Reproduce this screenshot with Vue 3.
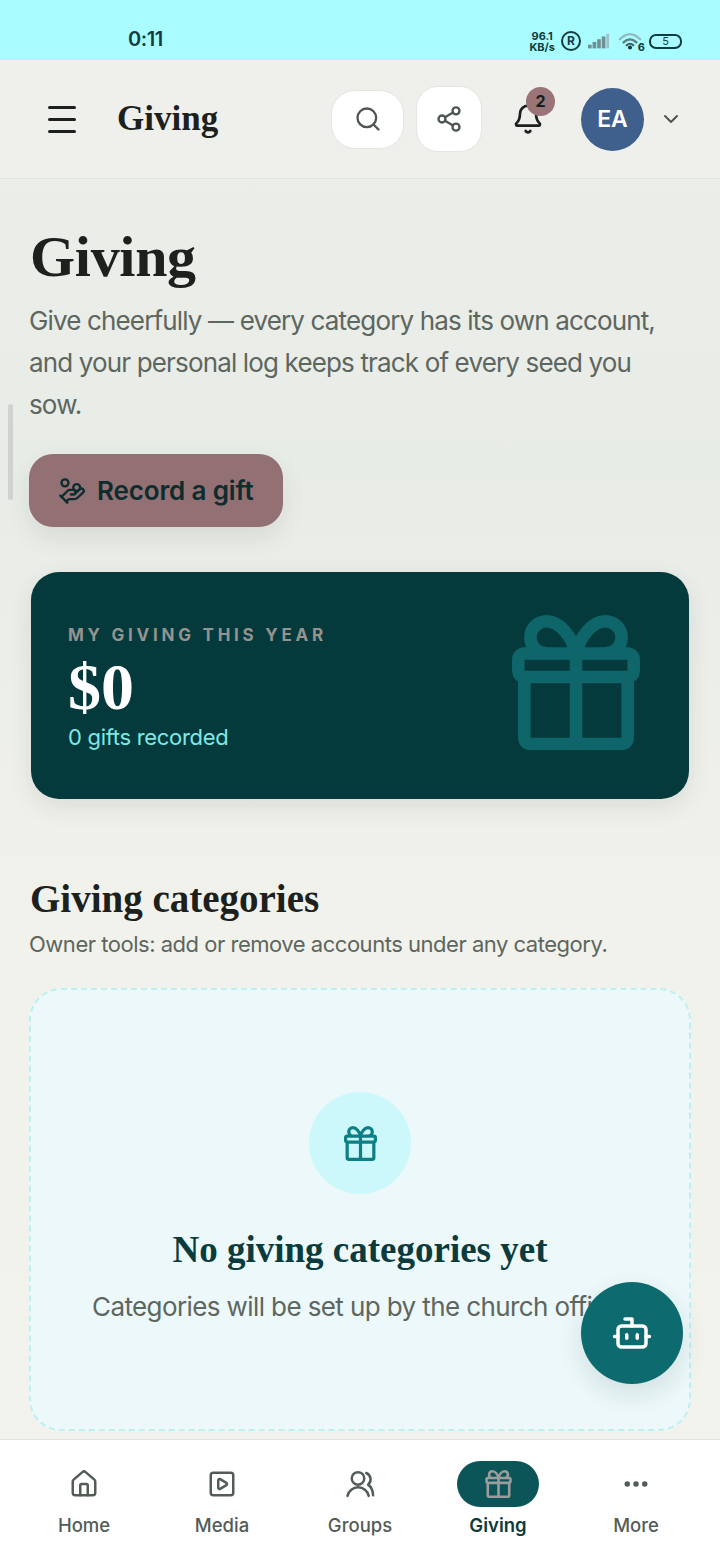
<script setup>
// Lucide-style icon bodies, all on a 24 unit grid
const navItems = [
  { label: 'Home', icon: 'home' },
  { label: 'Media', icon: 'media' },
  { label: 'Groups', icon: 'groups' },
  { label: 'Giving', icon: 'gift', active: true },
  { label: 'More', icon: 'more' }
];

// Gift shape is drawn on a 128x135 box so it scales for every size used here
const giftPath =
  'M12.3 38.5H115.7a6 6 0 0 1 6 6V56a6 6 0 0 1-6 6H12.3a6 6 0 0 1-6-6V44.5a6 6 0 0 1 6-6Z' +
  'M12.3 62V123a6 6 0 0 0 6 6H109.7a6 6 0 0 0 6-6V62' +
  'M64 38.5V129' +
  'M64 38.5C60 22 48 6.3 34.500 6.3A16 16 0 0 0 34.500 38.5' +
  'M64 38.5C68 22 80 6.3 93.500 6.3A16 16 0 0 1 93.500 38.5';
</script>

<template>
  <div class="screen">
    <div class="status-bar">
      <span class="clock">0:11</span>
      <div class="status-icons">
        <span class="speed">96.1<br />KB/s</span>
        <span class="reg">R</span>
        <svg class="signal" width="22" height="17" viewBox="0 0 24 17">
          <rect x="0" y="12" width="4" height="4" fill="#6f9092" />
          <rect x="5" y="9" width="4" height="7" fill="#6f9092" />
          <rect x="10" y="6" width="4" height="10" fill="#6f9092" />
          <rect x="15" y="3" width="4" height="13" fill="#6f9092" />
          <rect x="20" y="0" width="3" height="16" fill="#9cc4c6" />
        </svg>
        <span class="wifi">
          <svg width="24" height="19" viewBox="0 0 26 19" fill="none" stroke-linecap="round">
            <path d="M2 7C9 0 17 0 24 7" stroke="#8fb8ba" stroke-width="2.500" />
            <path d="M6 10.500C10.500 6 15.500 6 20 10.500" stroke="#5b7f82" stroke-width="2.500" />
            <path d="M9.500 13.500C11.500 11.500 14.500 11.500 16.500 13.500" stroke="#3d5f62" stroke-width="2.500" />
            <circle cx="13" cy="16" r="2.200" fill="#123c40" />
          </svg>
          <b>6</b>
        </span>
        <span class="battery">5</span>
      </div>
    </div>

    <header class="topbar">
      <button class="menu-btn" aria-label="Menu"><i></i><i></i><i></i></button>
      <div class="topbar-title">Giving</div>
      <button class="icon-btn search-btn" aria-label="Search">
        <svg width="28" height="28" viewBox="0 0 24 24" fill="none" stroke="#4e5651" stroke-width="2" stroke-linecap="round" stroke-linejoin="round">
          <circle cx="11" cy="11" r="8" />
          <path d="m21 21-4.300-4.300" />
        </svg>
      </button>
      <button class="icon-btn share-btn" aria-label="Share">
        <svg width="28" height="28" viewBox="0 0 24 24" fill="none" stroke="#4e5651" stroke-width="2" stroke-linecap="round" stroke-linejoin="round">
          <circle cx="18" cy="5" r="3" />
          <circle cx="6" cy="12" r="3" />
          <circle cx="18" cy="19" r="3" />
          <path d="M8.590 13.510 15.420 17.490M15.410 6.510 8.590 10.490" />
        </svg>
      </button>
      <div class="bell">
        <svg width="32" height="32" viewBox="0 0 24 24" fill="none" stroke="#1b211e" stroke-width="2" stroke-linecap="round" stroke-linejoin="round">
          <path d="M10.268 21a2 2 0 0 0 3.464 0" />
          <path d="M3.262 15.326A1 1 0 0 0 4 17h16a1 1 0 0 0 .74-1.673C19.410 13.956 18 12.499 18 8A6 6 0 0 0 6 8c0 4.499-1.411 5.956-2.738 7.326" />
        </svg>
        <span class="badge">2</span>
      </div>
      <div class="avatar">EA</div>
      <svg class="chevron" width="24" height="24" viewBox="0 0 24 24" fill="none" stroke="#4e5651" stroke-width="2" stroke-linecap="round" stroke-linejoin="round">
        <path d="m6 9 6 6 6-6" />
      </svg>
    </header>

    <main class="content">
      <h1>Giving</h1>
      <p class="lead">Give cheerfully — every category has its own account, and your personal log keeps track of every seed you sow.</p>

      <button class="record-btn">
        <svg width="28" height="28" viewBox="0 0 24 24" fill="none" stroke="#0d2c2e" stroke-width="2" stroke-linecap="round" stroke-linejoin="round">
          <path d="M11 15h2a2 2 0 1 0 0-4h-3c-.6 0-1.100.2-1.400.6L3 17" />
          <path d="m7 21 1.600-1.400c.3-.4.8-.6 1.400-.6h4c1.100 0 2.100-.4 2.800-1.200l4.600-4.400a2 2 0 0 0-2.750-2.910l-4.200 3.900" />
          <path d="m2 16 6 6" />
          <circle cx="16" cy="9" r="2.900" />
          <circle cx="6" cy="5" r="3" />
        </svg>
        Record a gift
      </button>

      <section class="year-card">
        <div class="year-text">
          <div class="year-label">MY GIVING THIS YEAR</div>
          <div class="year-amount">$0</div>
          <div class="year-count">0 gifts recorded</div>
        </div>
        <svg class="year-gift" width="128" height="135" viewBox="0 0 128 135" fill="none" stroke="#0e666b" stroke-width="12.500" stroke-linecap="round" stroke-linejoin="round">
          <path :d="giftPath" />
        </svg>
      </section>

      <h2>Giving categories</h2>
      <p class="section-note">Owner tools: add or remove accounts under any category.</p>

      <section class="empty-card">
        <div class="empty-icon">
          <svg width="33" height="35" viewBox="0 0 128 135" fill="none" stroke="#0e7f84" stroke-width="12.500" stroke-linecap="round" stroke-linejoin="round">
            <path :d="giftPath" />
          </svg>
        </div>
        <h3>No giving categories yet</h3>
        <p>Categories will be set up by the church office.</p>
      </section>
    </main>

    <nav class="bottom-nav">
      <a v-for="item in navItems" :key="item.label" class="nav-item" :class="{ active: item.active }">
        <span class="nav-icon">
          <svg v-if="item.icon === 'gift'" width="27" height="28" viewBox="0 0 128 135" fill="none" stroke="#9c9c9c" stroke-width="12.500" stroke-linecap="round" stroke-linejoin="round">
            <path :d="giftPath" />
          </svg>
          <svg v-else width="30" height="30" viewBox="0 0 24 24" fill="none" stroke="#545c57" stroke-width="2" stroke-linecap="round" stroke-linejoin="round">
            <template v-if="item.icon === 'home'">
              <path d="M15 21v-8a1 1 0 0 0-1-1h-4a1 1 0 0 0-1 1v8" />
              <path d="M3 10a2 2 0 0 1 .709-1.528l7-5.999a2 2 0 0 1 2.582 0l7 5.999A2 2 0 0 1 21 10v9a2 2 0 0 1-2 2H5a2 2 0 0 1-2-2z" />
            </template>
            <template v-else-if="item.icon === 'media'">
              <rect x="3" y="3" width="18" height="18" rx="2" />
              <path d="M9 9.003a1 1 0 0 1 1.517-.859l4.997 2.997a1 1 0 0 1 0 1.718l-4.997 2.997A1 1 0 0 1 9 14.996z" />
            </template>
            <template v-else-if="item.icon === 'groups'">
              <path d="M2 21.500a8.700 8.700 0 0 1 17 0" />
              <circle cx="10.400" cy="7.500" r="5" />
              <path d="M17 3.200a5.500 5.500 0 0 1 1.500 9.300c2.500 1.800 3.800 5 4 8.500" />
            </template>
            <template v-else>
              <circle cx="5" cy="12" r="1.200" fill="#545c57" />
              <circle cx="12" cy="12" r="1.200" fill="#545c57" />
              <circle cx="19" cy="12" r="1.200" fill="#545c57" />
            </template>
          </svg>
        </span>
        <span class="nav-label">{{ item.label }}</span>
      </a>
    </nav>

    <div class="scroll-thumb"></div>

    <button class="fab" aria-label="Assistant">
      <svg width="42" height="42" viewBox="0 0 24 24" fill="none" stroke="#fff" stroke-width="2" stroke-linecap="round" stroke-linejoin="round">
        <path d="M12 8V4H8" />
        <rect x="4" y="8" width="16" height="12" rx="2" />
        <path d="M2 14h2M20 14h2M15 13v2M9 13v2" />
      </svg>
    </button>
  </div>
</template>

<style scoped>
.screen {
  position: relative;
  width: 720px;
  height: 1560px;
  overflow: hidden;
  display: flex;
  flex-direction: column;
  font-family: Inter, "Liberation Sans", sans-serif;
  background: linear-gradient(180deg, #eeefe9 0%, #e8ece7 30%, #f2f2ec 60%, #f2f2ee 100%);
  color: #1c211d;
}

button {
  font-family: inherit;
  cursor: pointer;
}

.status-bar {
  height: 60px;
  flex: none;
  background: #a9fcff;
  display: flex;
  align-items: flex-end;
  justify-content: space-between;
  padding: 0 38px 8px 128px;
  box-sizing: border-box;
  color: #123c40;
}

.clock {
  font-size: 20px;
  font-weight: 600;
  line-height: 26px;
  letter-spacing: -0.4px;
}

.status-icons {
  display: flex;
  align-items: center;
  gap: 7px;
  height: 22px;
}

.speed {
  margin-top: 2px;
  margin-right: -1px;
  font-size: 11px;
  font-weight: 700;
  line-height: 11px;
  text-align: center;
}

.reg {
  width: 16px;
  height: 16px;
  border: 2px solid #123c40;
  border-radius: 50%;
  font-size: 12px;
  font-weight: 700;
  line-height: 16px;
  text-align: center;
}

.wifi {
  position: relative;
  display: flex;
  margin-left: 1px;
}

.wifi b {
  position: absolute;
  right: -3px;
  bottom: -3px;
  font-size: 11px;
}

.battery {
  width: 29px;
  height: 11px;
  border: 2px solid #123c40;
  border-radius: 7px;
  font-size: 11px;
  line-height: 11px;
  text-align: center;
}

.topbar {
  height: 119px;
  flex: none;
  box-sizing: border-box;
  display: flex;
  align-items: center;
  padding-left: 48px;
  background: #eff0ec;
  border-bottom: 1px solid #e2e3de;
}

.menu-btn {
  width: 28px;
  height: 27px;
  padding: 0;
  border: 0;
  background: none;
  display: flex;
  flex-direction: column;
  justify-content: space-between;
}

.menu-btn i {
  display: block;
  height: 3px;
  border-radius: 2px;
  background: #1c211d;
}

.topbar-title {
  margin-left: 41px;
  width: 214px;
  font-family: "Liberation Serif", serif;
  font-size: 35px;
  font-weight: 700;
}

.icon-btn {
  display: flex;
  align-items: center;
  justify-content: center;
  padding: 0;
  background: #fff;
  border: 1px solid #e5e5e1;
}

.search-btn {
  width: 73px;
  height: 59px;
  border-radius: 24px;
}

.share-btn {
  width: 66px;
  height: 66px;
  margin-left: 12px;
  border-radius: 22px;
}

.bell {
  position: relative;
  margin-left: 30px;
  width: 32px;
  height: 32px;
}

.badge {
  position: absolute;
  top: -16px;
  left: 14px;
  width: 29px;
  height: 29px;
  border-radius: 50%;
  background: #9a7476;
  color: #10201f;
  font-size: 16px;
  font-weight: 700;
  line-height: 29px;
  text-align: center;
}

.avatar {
  width: 63px;
  height: 63px;
  margin-left: 37px;
  border-radius: 50%;
  background: #3f5f8d;
  color: #fff;
  font-size: 23px;
  font-weight: 600;
  line-height: 63px;
  text-align: center;
}

.chevron {
  margin-left: 15px;
}

.content {
  flex: 1;
  min-height: 0;
  overflow: hidden;
  padding: 44px 30px 0;
}

h1 {
  margin: 0;
  font-family: "Liberation Serif", serif;
  font-size: 58px;
  font-weight: 700;
  line-height: 68px;
  letter-spacing: -0.3px;
  color: #1c211d;
}

.lead {
  max-width: 640px;
  margin: 9px 0 0 -1px;
  font-size: 26px;
  line-height: 42px;
  letter-spacing: -0.85px;
  color: #5d665f;
}

.record-btn {
  display: flex;
  align-items: center;
  gap: 11px;
  width: 254px;
  height: 73px;
  margin: 28px 0 0 -1px;
  padding: 0 0 0 29px;
  border: 0;
  border-radius: 24px;
  background: #927073;
  color: #0d2c2e;
  font-size: 26px;
  font-weight: 600;
  letter-spacing: -0.15px;
  box-shadow: 0 10px 24px rgba(60, 60, 50, 0.1);
}

.year-card {
  display: flex;
  align-items: center;
  justify-content: space-between;
  height: 227px;
  margin: 45px 1px 0;
  padding: 0 49px 0 37px;
  box-sizing: border-box;
  border-radius: 28px;
  background: #053a3d;
  box-shadow: 0 8px 24px rgba(40, 50, 40, 0.1);
}

.year-text {
  margin-top: 5px;
}

.year-gift {
  margin-bottom: 7px;
}

.year-label {
  font-size: 17px;
  font-weight: 700;
  letter-spacing: 3.75px;
  color: #96938f;
}

.year-amount {
  margin-top: 8px;
  font-family: "Liberation Serif", serif;
  font-size: 66px;
  font-weight: 700;
  line-height: 68px;
  color: #fff;
}

.year-count {
  margin-top: 1px;
  font-size: 22px;
  line-height: 30px;
  letter-spacing: -0.3px;
  color: #7fe8e4;
}

h2 {
  margin: 76px 0 0;
  font-family: "Liberation Serif", serif;
  font-size: 39px;
  font-weight: 700;
  line-height: 48px;
}

.section-note {
  margin: 5px 0 0 -1px;
  font-size: 22px;
  line-height: 32px;
  letter-spacing: -0.48px;
  color: #5d665f;
}

.empty-card {
  display: flex;
  flex-direction: column;
  align-items: center;
  height: 443px;
  margin: 28px -1px 0;
  padding-top: 102px;
  box-sizing: border-box;
  border: 2px dashed #bdf0ee;
  border-radius: 32px;
  background: #ecf8f9;
}

.empty-icon {
  display: flex;
  align-items: center;
  justify-content: center;
  width: 102px;
  height: 102px;
  border-radius: 50%;
  background: #ccf8fb;
}

h3 {
  margin: 34px 0 0;
  font-family: "Liberation Serif", serif;
  font-size: 37px;
  font-weight: 700;
  line-height: 44px;
  color: #0b3b3d;
}

.empty-card p {
  margin: 17px 0 0;
  font-size: 26px;
  line-height: 36px;
  letter-spacing: -0.6px;
  color: #5d665f;
}

.bottom-nav {
  height: 121px;
  flex: none;
  box-sizing: border-box;
  display: grid;
  grid-template-columns: repeat(5, 138px);
  padding: 21px 0 0 15px;
  background: #fff;
  border-top: 1px solid #e2e2df;
}

.nav-item {
  display: flex;
  flex-direction: column;
  align-items: center;
  color: #545c57;
}

.nav-icon {
  display: flex;
  align-items: center;
  justify-content: center;
  width: 82px;
  height: 46px;
  border-radius: 23px;
}

.nav-item.active .nav-icon {
  background: #0b5559;
}

.nav-label {
  margin-top: 6px;
  font-size: 18.500px;
  font-weight: 500;
  line-height: 24px;
}

.nav-item.active .nav-label {
  color: #0b3b3d;
  font-weight: 600;
}

.scroll-thumb {
  position: absolute;
  left: 8px;
  top: 404px;
  width: 5px;
  height: 96px;
  border-radius: 3px;
  background: #cfd2ce;
}

.fab {
  position: absolute;
  left: 581px;
  top: 1282px;
  display: flex;
  align-items: center;
  justify-content: center;
  width: 102px;
  height: 102px;
  padding: 0;
  border: 0;
  border-radius: 50%;
  background: #0d6a6e;
  box-shadow: 0 10px 26px rgba(20, 60, 60, 0.12);
}
</style>
